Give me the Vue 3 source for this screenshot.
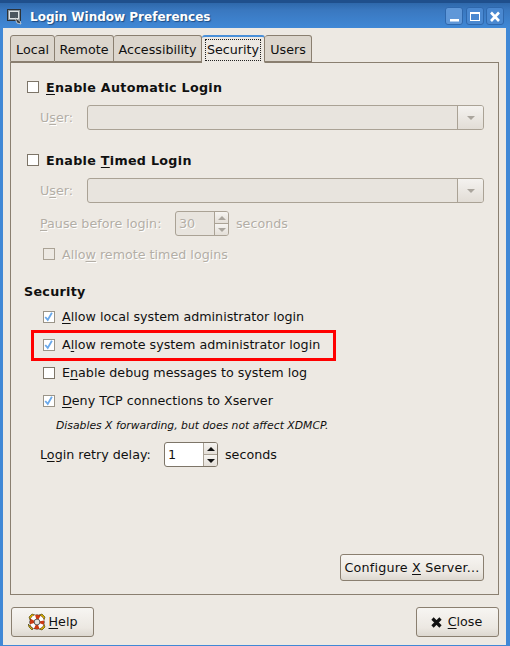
<template>
  <div class="window">
    <header class="titlebar">
      <svg class="app-icon" width="17" height="17" viewBox="0 0 17 17">
        <rect x="1.5" y="1.5" width="13" height="11" fill="#8d959c" stroke="#2c3238" />
        <rect x="3.5" y="3.5" width="9" height="7" fill="#4c5660" stroke="#dfe3e6" />
        <path d="M9 10l5 3 1 3-4-1z" fill="#3a3f44" stroke="#e6e8ea" stroke-width="0.7" />
      </svg>
      <span class="title">Login Window Preferences</span>
      <div class="wm-buttons">
        <button class="wm-btn hover"><svg width="12" height="12" viewBox="0 0 12 12"><rect x="2" y="9" width="9" height="2.5" fill="#fff" /></svg></button>
        <button class="wm-btn"><svg width="12" height="12" viewBox="0 0 12 12"><rect x="1.5" y="2.5" width="9" height="8" fill="none" stroke="#fff" /><rect x="1" y="2" width="10" height="2" fill="#fff" /></svg></button>
        <button class="wm-btn"><svg width="12" height="12" viewBox="0 0 12 12"><path d="M2 2.5l8 8.5M10 2.5l-8 8.5" stroke="#fff" stroke-width="2.6" /></svg></button>
      </div>
    </header>

    <div class="content">
      <nav class="tabs">
        <div
          v-for="tab in tabs"
          :key="tab.name"
          class="tab"
          :class="{ active: tab.name === 'Security' }"
          :style="{ width: tab.width + 'px' }"
        >
          <span :class="{ focused: tab.name === 'Security' }">{{ tab.name }}</span>
        </div>
      </nav>

      <section class="panel">
        <label class="check bold"><i class="box"></i><span><u>E</u>nable Automatic Login</span></label>
        <div class="user-row disabled">
          <span class="user-label">U<u>s</u>er:</span>
          <div class="combo"><div class="combo-arrow"><i class="tri"></i></div></div>
        </div>

        <label class="check bold timed"><i class="box"></i><span>Enable <u>T</u>imed Login</span></label>
        <div class="user-row disabled">
          <span class="user-label">U<u>s</u>er:</span>
          <div class="combo"><div class="combo-arrow"><i class="tri"></i></div></div>
        </div>
        <div class="pause-row disabled">
          <span class="pause-label"><u>P</u>ause before login:</span>
          <div class="spin dim">
            <span class="spin-value">30</span>
            <div class="spin-arrows"><div><i class="tri up"></i></div><div><i class="tri"></i></div></div>
          </div>
          <span>seconds</span>
        </div>
        <label class="check disabled remote-timed"><i class="box dim-box"></i><span>Allo<u>w</u> remote timed logins</span></label>

        <h3 class="group-title">Security</h3>
        <div class="options">
          <div v-for="opt in options" :key="opt.id" class="option" :class="{ highlighted: opt.id === 'remote' }">
            <i class="box" :class="{ checked: opt.checked }">
              <svg v-if="opt.checked" width="12" height="12" viewBox="0 0 12 12"><path d="M1.5 6l3 3.5 5-8.5" fill="none" stroke="#6ba9ea" stroke-width="2.2" /></svg>
            </i>
            <span class="option-text">{{ opt.before }}<u>{{ opt.key }}</u>{{ opt.after }}</span>
          </div>
        </div>
        <p class="hint">Disables X forwarding, but does not affect XDMCP.</p>
        <div class="retry-row">
          <span class="retry-label">L<u>o</u>gin retry delay:</span>
          <div class="spin">
            <span class="spin-value">1</span>
            <div class="spin-arrows"><div><i class="tri up"></i></div><div><i class="tri"></i></div></div>
          </div>
          <span>seconds</span>
        </div>

        <div class="configure-row">
          <button class="btn configure"><span>Configure <u>X</u> Server...</span></button>
        </div>
      </section>

      <footer class="actions">
        <button class="btn action help">
          <svg width="18" height="18" viewBox="0 0 18 18">
            <path d="M1 4l3-3 3 1-5 5zM14 1l3 3-1 3-5-5zM17 14l-3 3-3-1 5-5zM4 17l-3-3-1-3 5 5z" fill="#d8b000" stroke="#3a3000" stroke-width="0.6" />
            <circle cx="9" cy="9" r="7.6" fill="#2a2a2a" />
            <circle cx="9" cy="9" r="5.1" fill="none" stroke="#cc3a12" stroke-width="4.2" />
            <circle cx="9" cy="9" r="5.1" fill="none" stroke="#fff" stroke-width="4.2" stroke-dasharray="4 4.01" stroke-dashoffset="-2" />
            <circle cx="9" cy="9" r="2.9" fill="#e6e3de" stroke="#444" stroke-width="0.8" />
          </svg>
          <span class="action-text"><u>H</u>elp</span>
        </button>
        <button class="btn action close">
          <svg width="13" height="13" viewBox="0 0 13 13"><path d="M2.5 2.5l8 8M10.5 2.5l-8 8" stroke="#111" stroke-width="3.2" /></svg>
          <span class="action-text"><u>C</u>lose</span>
        </button>
      </footer>
    </div>
  </div>
</template>

<script setup>
const tabs = [
  { name: "Local", width: 45 },
  { name: "Remote", width: 59 },
  { name: "Accessibility", width: 88 },
  { name: "Security", width: 63 },
  { name: "Users", width: 47 },
];

const options = [
  { id: "local", before: "", key: "A", after: "llow local system administrator login", checked: true },
  { id: "remote", before: "A", key: "l", after: "low remote system administrator login", checked: true },
  { id: "debug", before: "E", key: "n", after: "able debug messages to system log", checked: false },
  { id: "tcp", before: "", key: "D", after: "eny TCP connections to Xserver", checked: true },
];
</script>

<style>
html,
body {
  margin: 0;
  background: #ede9e3;
}
</style>

<style scoped>
.window {
  width: 510px;
  height: 646px;
  box-sizing: border-box;
  display: flex;
  flex-direction: column;
  font-family: "DejaVu Sans", sans-serif;
  font-size: 12.7px;
  color: #101010;
  background: #4088d6;
  overflow: hidden;
}

u {
  text-underline-offset: 2px;
}

.titlebar {
  height: 28px;
  flex: none;
  display: flex;
  align-items: center;
  padding: 1px 6px 0;
  color: #fff;
  font-weight: bold;
  font-size: 12px;
  background: linear-gradient(#2e68ab 0, #3a78c0 30%, #4088d6 100%);
  border-top: 3px solid #1f4f8c;
  box-sizing: border-box;
}

.app-icon {
  margin-right: 7px;
}

.title {
  flex: 1;
  padding-top: 2px;
  text-shadow: 1px 1px 1px #1d4a80;
}

.wm-buttons {
  display: flex;
  gap: 2px;
}

.wm-btn {
  width: 18px;
  height: 18px;
  padding: 0;
  display: flex;
  align-items: center;
  justify-content: center;
  background: #4a88d0;
  border: 1px solid #2f68ad;
  border-radius: 3px;
}

.wm-btn.hover {
  margin-right: 1px;
  background: #5f97d8;
}

.content {
  flex: 1;
  margin: 0 4px 1px 3px;
  padding: 7px 7px 8px;
  background: #ede9e3;
  display: flex;
  flex-direction: column;
  min-height: 0;
}

.tabs {
  display: flex;
  height: 28px;
  flex: none;
  margin-bottom: -1px;
  position: relative;
  z-index: 1;
}

.tab {
  height: 27px;
  box-sizing: border-box;
  padding-top: 2px;
  display: flex;
  align-items: center;
  justify-content: center;
  background: #dcd6cd;
  border: 1px solid #8a7f70;
  border-left-width: 0;
  border-radius: 3px 3px 0 0;
}

.tab:first-child {
  border-left-width: 1px;
}

.tab.active {
  height: 28px;
  padding-top: 0;
  background: #ede9e3;
  border-top: 2px solid #4a90d9;
  border-bottom-color: #ede9e3;
}

.focused {
  display: block;
  outline: 1px dotted #222;
  padding: 2px 1px 3px;
}

.panel {
  flex: 1;
  border: 1px solid #8a7f70;
  padding: 14px 14px 13px 13px;
  display: flex;
  flex-direction: column;
  min-height: 0;
}

.check {
  display: flex;
  align-items: center;
  gap: 7px;
  height: 20px;
  flex: none;
  margin-left: 3px;
}

.bold {
  font-weight: bold;
  letter-spacing: 0.3px;
}

.timed {
  margin-top: 20px;
}

.box {
  width: 10px;
  height: 10px;
  flex: none;
  background: #fff;
  border: 1px solid #7d7568;
  display: flex;
  align-items: center;
  justify-content: center;
}

.box.checked {
  border-color: #9a9488;
}

.dim-box {
  background: #ede9e3;
  border-color: #aaa295;
}

.disabled {
  color: #b3aea6;
  text-shadow: 1px 1px 0 #fff;
}

.user-row {
  display: flex;
  align-items: center;
  margin-top: 8px;
  height: 25px;
  flex: none;
}

.user-label {
  width: 63px;
  padding-left: 16px;
  box-sizing: border-box;
}

.combo {
  flex: 1;
  height: 25px;
  box-sizing: border-box;
  background: #e8e4de;
  border: 1px solid #aaa295;
  border-radius: 3px;
  display: flex;
  justify-content: flex-end;
  overflow: hidden;
}

.combo-arrow {
  width: 25px;
  border-left: 1px solid #aaa295;
  background: linear-gradient(#f4f2ef, #e2ddd6);
  display: flex;
  align-items: center;
  justify-content: center;
}

.tri {
  display: block;
  width: 0;
  height: 0;
  border-left: 4px solid transparent;
  border-right: 4px solid transparent;
  border-top: 4px solid #aaa59d;
}

.tri.up {
  border-top: 0;
  border-bottom: 4px solid #aaa59d;
}

.pause-row {
  display: flex;
  align-items: center;
  gap: 7px;
  height: 25px;
  flex: none;
  margin-top: 8px;
  padding-left: 16px;
}

.pause-label {
  width: 128px;
  white-space: nowrap;
}

.spin {
  width: 54px;
  height: 25px;
  box-sizing: border-box;
  border: 1px solid #7d7568;
  border-radius: 3px;
  background: #fff;
  display: flex;
  overflow: hidden;
}

.spin.dim {
  background: #e8e4de;
  border-color: #aaa295;
}

.spin-value {
  flex: 1;
  padding-left: 3px;
  line-height: 23px;
}

.spin-arrows {
  width: 13px;
  border-left: 1px solid #aaa295;
  display: flex;
  flex-direction: column;
}

.spin-arrows div {
  flex: 1;
  display: flex;
  align-items: center;
  justify-content: center;
  background: linear-gradient(#f6f4f1, #e4dfd8);
}

.spin-arrows div + div {
  border-top: 1px solid #aaa295;
}

.spin:not(.dim) .tri {
  border-top-color: #111;
}

.spin:not(.dim) .tri.up {
  border-bottom-color: #111;
}

.remote-timed {
  margin-top: 8px;
  margin-left: 19px;
}

.group-title {
  margin: 19px 0 0;
  font-size: 12.7px;
  line-height: 18px;
  letter-spacing: 0.3px;
  flex: none;
}

.options {
  margin-top: 2px;
  display: flex;
  flex-direction: column;
  flex: none;
}

.option {
  display: flex;
  align-items: center;
  gap: 7px;
  height: 28px;
  padding-left: 19px;
  position: relative;
}

.option-text,
.action-text {
  padding-bottom: 2px;
}

.highlighted::after {
  content: "";
  position: absolute;
  left: 7px;
  top: -1px;
  width: 305px;
  height: 31px;
  box-sizing: border-box;
  border: 3px solid #f00;
  pointer-events: none;
}

.hint {
  margin: 4px 0 0;
  padding-left: 32px;
  font-size: 10.8px;
  font-style: italic;
  line-height: 14px;
  flex: none;
}

.retry-row {
  display: flex;
  align-items: center;
  gap: 7px;
  height: 25px;
  flex: none;
  margin-top: 9px;
  padding-left: 16px;
}

.retry-label {
  width: 117px;
  white-space: nowrap;
}

.configure-row {
  margin-top: auto;
  display: flex;
  justify-content: flex-end;
}

.btn {
  font: inherit;
  color: inherit;
  padding: 0;
  background: linear-gradient(#f7f5f2, #ece8e2 70%, #ddd8d0);
  border: 1px solid #8a7f70;
  border-radius: 3px;
  display: flex;
  align-items: center;
  justify-content: center;
}

.configure {
  width: 144px;
  height: 27px;
  letter-spacing: 0.2px;
}

.actions {
  display: flex;
  justify-content: space-between;
  margin-top: 12px;
  padding-left: 1px;
}

.action {
  width: 83px;
  height: 30px;
}

.help {
  gap: 3px;
}

.close {
  gap: 5px;
  padding-right: 3px;
}
</style>
